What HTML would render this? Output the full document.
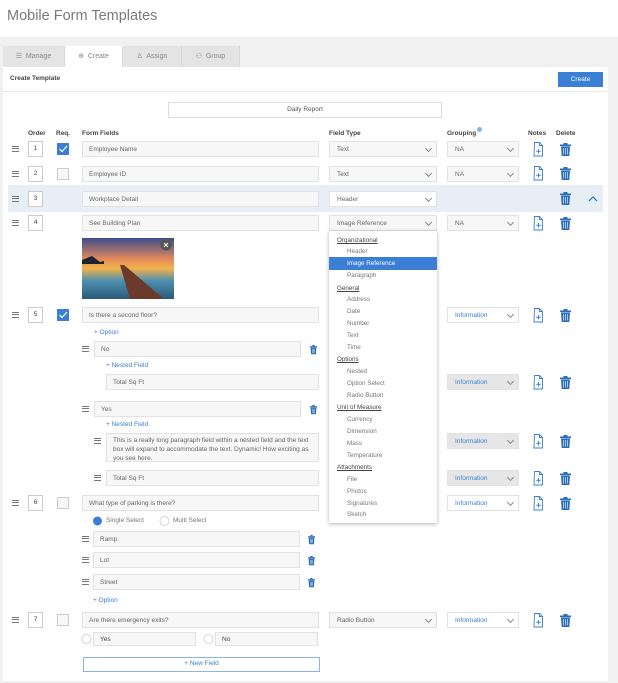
<!DOCTYPE html>
<html><head><meta charset="utf-8"><style>
*{box-sizing:border-box;margin:0;padding:0}
body{width:618px;height:683px;background:#f1f1f1;font-family:"Liberation Sans",sans-serif;position:relative;overflow:hidden;color:#555}
.a{position:absolute}
.hdr{left:0;top:0;width:618px;height:37px;background:#fff}
.title{left:7px;top:8px;font-size:14.5px;color:#7a7a7a;font-weight:normal}
.tab{top:46px;height:21px;background:#e4e4e4;font-size:7px;color:#888;text-align:center;line-height:21px;border-right:1px solid #d8d8d8}
.panel{left:3px;top:67px;width:605px;height:614px;background:#fff}
.f{background:#f7f7f7;border:1px solid #e2e2e2;font-size:6.5px;color:#666;padding-left:6px;line-height:15px}
.sel{background:#f7f7f7;border:1px solid #e2e2e2;font-size:6.5px;color:#666;padding-left:7px;line-height:15px}
.sel:after{content:"";position:absolute;right:5px;top:4px;width:4px;height:4px;border-right:1px solid #888;border-bottom:1px solid #888;transform:rotate(45deg)}
.info{color:#3a7fd5;background:#fff}
.gray{background:#e6e6e6}
.ord{width:15px;height:16px;border:1px solid #ccc;font-size:6.5px;text-align:center;line-height:14px;color:#444;background:#fff}
.cb{width:12px;height:12px;border:1px solid #ccc;background:#f7f7f7}
.cbc{width:12px;height:12px;background:#3a7fd5}
.hb{width:7px;height:6px;border-top:1.2px solid #777;border-bottom:1.2px solid #777}
.hb:after{content:"";position:absolute;left:0;top:1.2px;width:7px;height:1.2px;background:#777}
.th{font-size:6.5px;font-weight:bold;color:#444}
.lnk{font-size:6.5px;color:#3a7fd5}
.dd{left:329px;top:231px;width:108px;height:292px;background:#fff;box-shadow:0 1px 4px rgba(0,0,0,.3)}
.dg{left:8px;font-size:6.3px;color:#444;text-decoration:underline}
.di{left:18px;font-size:6.3px;color:#777}
svg.top{z-index:5;pointer-events:none}
</style></head><body>
<div class="a hdr"></div>
<div class="a title">Mobile Form Templates</div>
<div class="a tab" style="left:3px;width:62px">☰&nbsp; Manage</div>
<div class="a tab" style="left:65px;width:58px;background:#fff;height:22px">⊕&nbsp; Create</div>
<div class="a tab" style="left:123px;width:59px">♙&nbsp; Assign</div>
<div class="a tab" style="left:182px;width:58px">⚇&nbsp; Group</div>
<div class="a panel"></div>
<div class="a th" style="left:10px;top:75px;font-size:6.5px">Create Template</div>
<div class="a" style="left:558px;top:72px;width:45px;height:15px;background:#3a7fd5;color:#fff;font-size:6.5px;text-align:center;line-height:15px">Create</div>
<div class="a" style="left:3px;top:91px;width:605px;height:1px;background:#e8e8e8"></div>
<div class="a" style="left:168px;top:102px;width:274px;height:16px;border:1px solid #ddd;font-size:6.5px;text-align:center;line-height:14px;color:#555">Daily Report</div>

<div class="a th" style="left:28px;top:130px">Order</div>
<div class="a th" style="left:56px;top:130px">Req.</div>
<div class="a th" style="left:82px;top:130px">Form Fields</div>
<div class="a th" style="left:329px;top:130px">Field Type</div>
<div class="a th" style="left:447px;top:130px">Grouping</div>
<div class="a" style="left:477px;top:127px;width:5px;height:5px;border-radius:50%;background:#8ab4e8"></div>
<div class="a th" style="left:528px;top:130px">Notes</div>
<div class="a th" style="left:556px;top:130px">Delete</div>

<div class="a" style="left:8px;top:185px;width:595px;height:27px;background:#e8eef6"></div>

<!-- row1 -->
<div class="a hb" style="left:12px;top:146px"></div><div class="a ord" style="left:28px;top:141px">1</div><div class="a cbc" style="left:57px;top:143px"></div>
<div class="a f" style="left:82px;top:141px;width:237px;height:16px">Employee Name</div>
<div class="a sel" style="left:329px;top:141px;width:108px;height:16px">Text</div>
<div class="a sel" style="left:447px;top:141px;width:72px;height:16px">NA</div>
<!-- row2 -->
<div class="a hb" style="left:12px;top:171px"></div><div class="a ord" style="left:28px;top:166px">2</div><div class="a cb" style="left:57px;top:168px"></div>
<div class="a f" style="left:82px;top:166px;width:237px;height:16px">Employee ID</div>
<div class="a sel" style="left:329px;top:166px;width:108px;height:16px">Text</div>
<div class="a sel" style="left:447px;top:166px;width:72px;height:16px">NA</div>
<!-- row3 -->
<div class="a hb" style="left:12px;top:196px"></div><div class="a ord" style="left:28px;top:191px">3</div>
<div class="a f" style="left:82px;top:191px;width:237px;height:16px">Workplace Detail</div>
<div class="a sel" style="left:329px;top:191px;width:108px;height:16px;background:#fff">Header</div>
<!-- row4 -->
<div class="a hb" style="left:12px;top:220px"></div><div class="a ord" style="left:28px;top:215px">4</div>
<div class="a f" style="left:82px;top:215px;width:237px;height:16px">See Building Plan</div>
<div class="a sel" style="left:329px;top:215px;width:108px;height:16px">Image Reference</div>
<div class="a sel" style="left:447px;top:215px;width:72px;height:16px">NA</div>
<!-- row5 -->
<div class="a hb" style="left:12px;top:312px"></div><div class="a ord" style="left:28px;top:307px">5</div><div class="a cbc" style="left:57px;top:309px"></div>
<div class="a f" style="left:82px;top:307px;width:237px;height:16px">Is there a second floor?</div>
<div class="a sel info" style="left:447px;top:307px;width:72px;height:16px">Information</div>
<div class="a lnk" style="left:94px;top:329px">+ Option</div>
<div class="a hb" style="left:82px;top:346px"></div>
<div class="a f" style="left:94px;top:341px;width:207px;height:16px">No</div>
<div class="a lnk" style="left:106px;top:362px">+ Nested Field</div>
<div class="a f" style="left:106px;top:374px;width:213px;height:16px">Total Sq Ft</div>
<div class="a sel info gray" style="left:447px;top:374px;width:72px;height:16px">Information</div>
<div class="a hb" style="left:82px;top:406px"></div>
<div class="a f" style="left:94px;top:401px;width:207px;height:16px">Yes</div>
<div class="a lnk" style="left:106px;top:421px">+ Nested Field</div>
<div class="a hb" style="left:94px;top:438px"></div>
<div class="a f" style="left:106px;top:433px;width:213px;height:29px;line-height:9px;padding-top:2px;padding-right:4px">This is a really long paragraph field within a nested field and the text box will expand to accommodate the text. Dynamic! How exciting as you see here.</div>
<div class="a sel info gray" style="left:447px;top:433px;width:72px;height:16px">Information</div>
<div class="a hb" style="left:94px;top:475px"></div>
<div class="a f" style="left:106px;top:470px;width:213px;height:16px">Total Sq Ft</div>
<div class="a sel info gray" style="left:447px;top:470px;width:72px;height:16px">Information</div>
<!-- row6 -->
<div class="a hb" style="left:12px;top:500px"></div><div class="a ord" style="left:28px;top:495px">6</div><div class="a cb" style="left:57px;top:497px"></div>
<div class="a f" style="left:82px;top:495px;width:237px;height:16px">What type of parking is there?</div>
<div class="a sel info" style="left:447px;top:495px;width:72px;height:16px">Information</div>
<div class="a" style="left:106px;top:517px;font-size:6.5px;color:#777">Single Select</div>
<div class="a" style="left:173px;top:517px;font-size:6.5px;color:#777">Multi Select</div>
<div class="a hb" style="left:82px;top:536px"></div><div class="a f" style="left:93px;top:531px;width:207px;height:16px">Ramp</div>
<div class="a hb" style="left:82px;top:557px"></div><div class="a f" style="left:93px;top:552px;width:207px;height:16px">Lot</div>
<div class="a hb" style="left:82px;top:579px"></div><div class="a f" style="left:93px;top:574px;width:207px;height:16px">Street</div>
<div class="a lnk" style="left:93px;top:597px">+ Option</div>
<!-- row7 -->
<div class="a hb" style="left:12px;top:617px"></div><div class="a ord" style="left:28px;top:612px">7</div><div class="a cb" style="left:57px;top:614px"></div>
<div class="a f" style="left:82px;top:612px;width:237px;height:16px">Are there emergency exits?</div>
<div class="a sel" style="left:329px;top:612px;width:108px;height:16px">Radio Button</div>
<div class="a sel info" style="left:447px;top:612px;width:72px;height:16px">Information</div>
<div class="a f" style="left:93px;top:632px;width:103px;height:14px;line-height:13px;color:#444">Yes</div>
<div class="a f" style="left:215px;top:632px;width:103px;height:14px;line-height:13px;color:#444">No</div>
<div class="a" style="left:83px;top:657px;width:237px;height:15px;border:1.5px solid #8ab4e8;font-size:6.5px;color:#3a7fd5;text-align:center;line-height:12px">+ New Field</div>

<svg class="a top" style="left:0;top:0" width="618" height="683">
<defs>
<g id="note"><path d="M3.5 0.5h5l3 3v10.5h-8.5z M8.5 0.5v3h3" fill="#fff" stroke="#3a7fd5" stroke-width="0.9"/><path d="M7.5 7v4.5M5.3 9.25h4.4" stroke="#3a7fd5" stroke-width="0.9"/></g>
<g id="trash"><rect x="0" y="1.5" width="11" height="1.6" fill="#2a6ebb"/><rect x="3.5" y="0" width="4" height="1.6" fill="#2a6ebb"/><path d="M1 3.5h9l-0.7 9.5h-7.6z" fill="#2a6ebb"/><path d="M3.5 5v6.5M5.5 5v6.5M7.5 5v6.5" stroke="#fff" stroke-width="0.6"/></g>
<g id="st"><rect x="0" y="1.2" width="7" height="1.2" fill="#2a6ebb"/><rect x="2.3" y="0" width="2.4" height="1.2" fill="#2a6ebb"/><path d="M0.6 2.6h5.8l-0.5 6.6h-4.8z" fill="#2a6ebb"/><path d="M2.4 3.8v4.4M3.5 3.8v4.4M4.6 3.8v4.4" stroke="#fff" stroke-width="0.4"/></g>
<linearGradient id="sky" x1="0" y1="0" x2="0" y2="1"><stop offset="0" stop-color="#3b4d8a"/><stop offset="0.35" stop-color="#e58a5a"/><stop offset="0.5" stop-color="#f2b34a"/><stop offset="0.7" stop-color="#4f8fb0"/><stop offset="1" stop-color="#2a5a78"/></linearGradient>
</defs>
<use href="#note" x="531" y="142"/><use href="#trash" x="560" y="143"/>
<use href="#note" x="531" y="166"/><use href="#trash" x="560" y="167"/>
<use href="#trash" x="560" y="192"/>
<path d="M589 201l4-4 4 4" fill="none" stroke="#2a6ebb" stroke-width="1.2"/>
<use href="#note" x="531" y="216"/><use href="#trash" x="560" y="217"/>
<use href="#note" x="531" y="308"/><use href="#trash" x="560" y="309"/>
<use href="#note" x="531" y="375"/><use href="#trash" x="560" y="376"/>
<use href="#note" x="531" y="434"/><use href="#trash" x="560" y="435"/>
<use href="#note" x="531" y="471"/><use href="#trash" x="560" y="472"/>
<use href="#note" x="531" y="496"/><use href="#trash" x="560" y="497"/>
<use href="#note" x="531" y="613"/><use href="#trash" x="560" y="614"/>
<use href="#st" x="310" y="345"/><use href="#st" x="310" y="405"/>
<use href="#st" x="308" y="535"/><use href="#st" x="308" y="556"/><use href="#st" x="308" y="578"/>
<path d="M59.5 149l2.5 2.5 5-5.5" fill="none" stroke="#fff" stroke-width="1.2"/>
<path d="M59.5 315l2.5 2.5 5-5.5" fill="none" stroke="#fff" stroke-width="1.2"/>
<rect x="82" y="238" width="92" height="61" fill="url(#sky)"/>
<path d="M82 260l10-4 8 6 4-1v3h-22z" fill="#1c2430"/>
<path d="M120 265l4 0 40 34h-34z" fill="#6b3a2a"/>
<circle cx="166" cy="245" r="5.5" fill="#555"/>
<path d="M164 243l4 4M168 243l-4 4" stroke="#fff" stroke-width="1"/>
<circle cx="97.5" cy="521" r="4.5" fill="#3a7fd5"/>
<circle cx="164.5" cy="521" r="4.5" fill="#fff" stroke="#ccc" stroke-width="0.8"/>
<circle cx="86.5" cy="639" r="4.5" fill="#fff" stroke="#ccc" stroke-width="0.8"/>
<circle cx="208.5" cy="639" r="4.5" fill="#fff" stroke="#ccc" stroke-width="0.8"/>
</svg>

<!-- dropdown -->
<div class="a dd" style="z-index:6">
<div class="a dg" style="top:6px">Organizational</div>
<div class="a di" style="top:17px">Header</div>
<div class="a" style="left:0;top:26px;width:108px;height:13px;background:#3a7fd5"></div>
<div class="a di" style="top:29px;color:#fff">Image Reference</div>
<div class="a di" style="top:41px">Paragraph</div>
<div class="a dg" style="top:54px">General</div>
<div class="a di" style="top:65px">Address</div>
<div class="a di" style="top:77px">Date</div>
<div class="a di" style="top:89px">Number</div>
<div class="a di" style="top:101px">Text</div>
<div class="a di" style="top:113px">Time</div>
<div class="a dg" style="top:125px">Options</div>
<div class="a di" style="top:137px">Nested</div>
<div class="a di" style="top:149px">Option Select</div>
<div class="a di" style="top:161px">Radio Button</div>
<div class="a dg" style="top:173px">Unit of Measure</div>
<div class="a di" style="top:185px">Currency</div>
<div class="a di" style="top:197px">Dimension</div>
<div class="a di" style="top:209px">Mass</div>
<div class="a di" style="top:221px">Temperature</div>
<div class="a dg" style="top:233px">Attachments</div>
<div class="a di" style="top:245px">File</div>
<div class="a di" style="top:257px">Photos</div>
<div class="a di" style="top:269px">Signatures</div>
<div class="a di" style="top:280px">Sketch</div>
</div>
</body></html>
